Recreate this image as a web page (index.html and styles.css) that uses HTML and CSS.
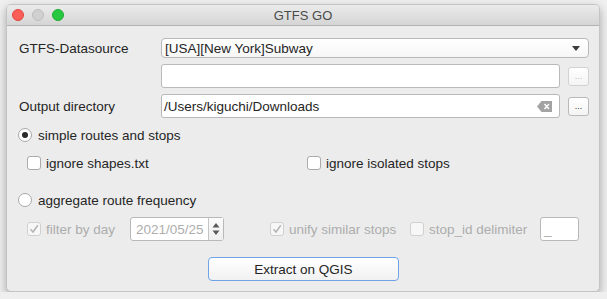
FILE: index.html
```html
<!DOCTYPE html>
<html lang="en">
<head>
  <meta charset="UTF-8" />
  <meta name="viewport" content="width=device-width, initial-scale=1.0"/>
  <title>GTFS GO</title>
  <link rel="stylesheet" href="styles.css">
</head>
<body>

  <div class="window">
    <div class="titlebar">
      <div class="lights">
        <span class="light red"></span>
        <span class="light idle"></span>
        <span class="light green"></span>
      </div>
      <div class="title">GTFS GO</div>
    </div>

    <div class="content">
      <div class="form-grid">
        <div class="label">GTFS-Datasource</div>
        <div class="combo">
          <span>[USA][New York]Subway</span>
          <svg class="combo-arrow" viewBox="0 0 8 5"><path d="M0 0h8L4 5z"/></svg>
        </div>

        <div class="label"></div>
        <div class="lineedit"></div>
        <div class="tool-cell"><span class="tool disabled">...</span></div>

        <div class="label">Output directory</div>
        <div class="lineedit">
          <span>/Users/kiguchi/Downloads</span>
          <svg class="clear" viewBox="0 0 15 11">
            <path d="M0 5.5L4.5 0H15V11H4.5z" fill="#a3a3a3"/>
            <path d="M7.5 3l4.5 5M12 3l-4.5 5" stroke="#fff" stroke-width="1.4"/>
          </svg>
        </div>
        <div class="tool-cell"><span class="tool">...</span></div>
      </div>

      <div class="radio-row first">
        <span class="radio checked"></span>
        <span>simple routes and stops</span>
      </div>

      <div class="check-row">
        <div class="check-item">
          <span class="checkbox"></span>
          <span>ignore shapes.txt</span>
        </div>
        <div class="check-item">
          <span class="checkbox"></span>
          <span>ignore isolated stops</span>
        </div>
      </div>

      <div class="radio-row second">
        <span class="radio"></span>
        <span>aggregate route frequency</span>
      </div>

      <div class="option-row">
        <div class="check-item day">
          <span class="checkbox on"><svg viewBox="0 0 10 10"><path d="M1.5 5.2L4 8 8.8 1.2"/></svg></span>
          <span>filter by day</span>
        </div>
        <div class="spinbox">
          <span class="spin-text">2021/05/25</span>
          <span class="stepper">
            <svg viewBox="0 0 8 14"><path d="M4 1l3.5 4.5h-7zM4 13l3.5-4.5h-7z"/></svg>
          </span>
        </div>
        <div class="check-item unify">
          <span class="checkbox on"><svg viewBox="0 0 10 10"><path d="M1.5 5.2L4 8 8.8 1.2"/></svg></span>
          <span>unify similar stops</span>
        </div>
        <div class="check-item delim">
          <span class="checkbox"></span>
          <span>stop_id delimiter</span>
        </div>
        <div class="lineedit small"><span class="muted">_</span></div>
      </div>

      <div class="actions">
        <button class="primary">Extract on QGIS</button>
      </div>
    </div>
  </div>

</body>
</html>
```

FILE: styles.css
```css
body {
  margin: 0;
  padding: 0;
  background: #efefef;
  font-family: 'Liberation Sans', Arial, sans-serif;
  font-size: 13.5px;
  color: #252525;
}

.window {
  box-sizing: border-box;
  width: 594px;
  height: 288px;
  margin: 4px 0 0 6px;
  border: 1px solid #c4c4c4;
  border-radius: 5px;
  background: #ececec;
  box-shadow: 0 4px 10px rgba(0, 0, 0, 0.3);
  overflow: hidden;
}

.titlebar {
  box-sizing: border-box;
  height: 21px;
  display: flex;
  align-items: center;
  position: relative;
  background: linear-gradient(#ebebeb, #d5d5d5);
  border-bottom: 1px solid #b3b3b3;
}

.lights {
  display: flex;
  gap: 8px;
  padding-left: 5px;
}

.light {
  box-sizing: border-box;
  width: 12px;
  height: 12px;
  border-radius: 50%;
}

.light.red {
  background: #fc5f57;
  border: 1px solid #e2463f;
}

.light.idle {
  background: #d0d0d0;
  border: 1px solid #bdbdbd;
}

.light.green {
  background: #28c840;
  border: 1px solid #1fab32;
}

.title {
  position: absolute;
  left: 0;
  right: 0;
  text-align: center;
  font-size: 13px;
  color: #4a4a4a;
}

.content {
  padding: 12px 10px 0 12px;
}

.form-grid {
  display: grid;
  grid-template-columns: 134px 1fr 21px;
  grid-template-rows: 20px 24px 24px;
  column-gap: 8px;
  row-gap: 6px;
}

.label {
  align-self: center;
}

.combo {
  grid-column: 2 / 4;
  box-sizing: border-box;
  display: flex;
  align-items: center;
  justify-content: space-between;
  padding: 0 8px 0 3px;
  border: 1px solid #b9b9b9;
  border-radius: 4px;
  background: linear-gradient(#ffffff, #f6f6f6);
}

.combo-arrow {
  width: 8px;
  height: 5px;
  fill: #3c3c3c;
}

.lineedit {
  box-sizing: border-box;
  display: flex;
  align-items: center;
  justify-content: space-between;
  padding: 0 7px 0 2px;
  border: 1px solid #b9b9b9;
  border-radius: 3px;
  background: #fff;
}

.clear {
  width: 15px;
  height: 11px;
}

.tool-cell {
  display: flex;
  align-items: center;
}

.tool {
  box-sizing: border-box;
  width: 21px;
  height: 19px;
  display: flex;
  align-items: center;
  justify-content: center;
  border: 1px solid #b9b9b9;
  border-radius: 3px;
  background: linear-gradient(#ffffff, #f4f4f4);
  font-size: 9px;
  line-height: 1;
  color: #333;
}

.tool.disabled {
  border-color: #d2d2d2;
  color: #b8b8b8;
}

.radio-row {
  display: flex;
  align-items: center;
  gap: 6px;
  height: 18px;
  margin-left: -1px;
}

.radio-row.first {
  margin-top: 8px;
}

.radio-row.second {
  margin-top: 19px;
}

.radio {
  box-sizing: border-box;
  width: 14px;
  height: 14px;
  border-radius: 50%;
  border: 1px solid #a9a9a9;
  background: #fff;
  display: flex;
  align-items: center;
  justify-content: center;
}

.radio.checked::after {
  content: "";
  width: 6px;
  height: 6px;
  border-radius: 50%;
  background: #2a2a2a;
}

.check-row {
  display: grid;
  grid-template-columns: 280px auto;
  height: 18px;
  align-items: center;
  margin-top: 10px;
  padding-left: 8px;
}

.check-item {
  display: flex;
  align-items: center;
  gap: 5px;
}

.checkbox {
  box-sizing: border-box;
  width: 14px;
  height: 14px;
  border: 1px solid #ababab;
  border-radius: 3px;
  background: #fff;
  display: flex;
  align-items: center;
  justify-content: center;
}

.checkbox svg {
  width: 10px;
  height: 10px;
  fill: none;
  stroke: #b4b4b4;
  stroke-width: 1.5;
}

.option-row {
  display: flex;
  align-items: center;
  height: 24px;
  margin-top: 8px;
  padding-left: 8px;
  color: #adadad;
}

.option-row .checkbox {
  border-color: #d0d0d0;
  background: #f7f7f7;
}

.check-item.day {
  width: 103px;
}

.check-item.unify {
  width: 140px;
  margin-left: 46px;
}

.check-item.delim {
  width: 130px;
}

.spinbox {
  box-sizing: border-box;
  width: 94px;
  height: 24px;
  display: flex;
  border: 1px solid #b9b9b9;
  border-radius: 3px;
  background: #fff;
}

.spin-text {
  flex: 1;
  display: flex;
  align-items: center;
  padding-left: 5px;
}

.stepper {
  width: 14px;
  display: flex;
  align-items: center;
  justify-content: center;
  border-left: 1px solid #c4c4c4;
  background: linear-gradient(#fbfbfb, #efefef);
}

.stepper svg {
  width: 8px;
  height: 14px;
  fill: #5a5a5a;
}

.lineedit.small {
  width: 39px;
  height: 24px;
  padding-left: 3px;
}

.muted {
  color: #a8a8a8;
}

.actions {
  display: flex;
  justify-content: center;
  margin-top: 16px;
  padding-right: 1px;
}

.primary {
  box-sizing: border-box;
  width: 191px;
  height: 24px;
  border: 1px solid #6fa3e8;
  border-radius: 4px;
  background: linear-gradient(#ffffff, #f1f1f1);
  font-family: 'Liberation Sans', Arial, sans-serif;
  font-size: 13.5px;
  color: #252525;
}
```
